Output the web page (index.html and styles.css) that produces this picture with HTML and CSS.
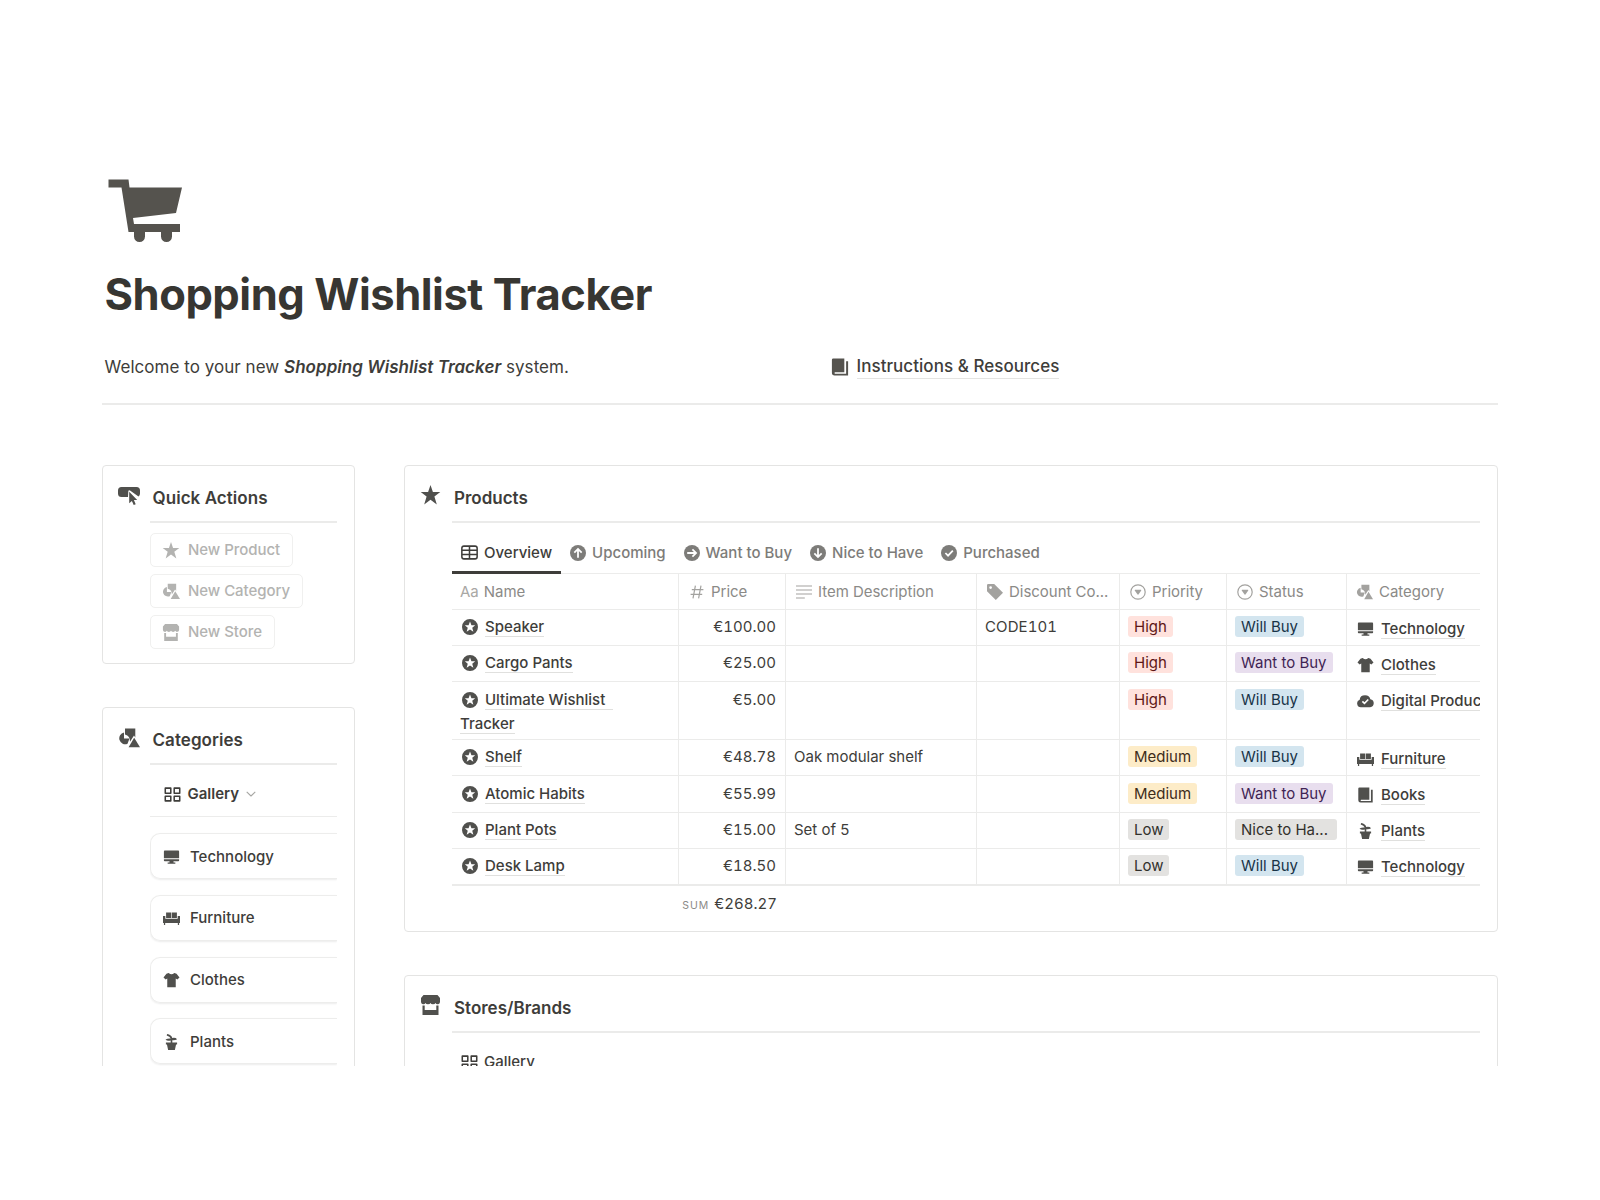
FILE: index.html
```html
<!DOCTYPE html>
<html lang="en">

<head>
    <meta charset="utf-8">
    <title>Shopping Wishlist Tracker</title>
    <link rel="stylesheet" href="styles.css">
</head>

<body>
    <svg width="0" height="0" class="sprite">
        <symbol id="star" viewBox="0 0 20 20"><path d="M10 0l2.4 7.1h7.4l-5.9 4.4 2.4 7.9-6.3-4.7-6.3 4.7 2.4-7.9L.2 7.1h7.4z"/></symbol>
        <symbol id="shapes" viewBox="0 0 22 20"><path d="M7 .5h10.300v9L16 7.500l-4 6.200Q12.300 8 7 6.500z"/><path d="M6 4.500v6h5.500L9.500 15.700A5.900 5.900 0 1 1 6 4.500z"/><path d="M16.200 9.800L22 19.300H10.600z"/></symbol>
        <symbol id="store" viewBox="0 0 20 20"><path d="M3 0h14l2.500 3v4a2.400 2.400 0 0 1-4.500 1 2.600 1.800 0 0 1-5 0 2.600 1.800 0 0 1-5 0A2.400 2.400 0 0 1 .5 7V3z"/><path d="M2 10.500h2.200V15h11.600v-4.500H18V20H2z"/></symbol>
        <symbol id="monitor" viewBox="0 0 20 20"><path d="M1.500 2h17q1 0 1 1v8.500H.5V3q0-1 1-1zM.5 12.700h19v1.600q0 1-1 1h-6v1.600h2.300v1.600H5.200v-1.600h2.300v-1.600h-6q-1 0-1-1z"/></symbol>
        <symbol id="sofa" viewBox="0 0 22 20"><path d="M4 3h6.600v7H4zM11.400 3H18v7h-6.600zM0 7.500h3V11h16V7.500h3v9h-1.200V19h-1.600v-2.500H2.800V19H1.200v-2.500H0z"/></symbol>
        <symbol id="shirt" viewBox="0 0 20 20"><path d="M6.500 1.300q3.500 3 7 0L16.300 2.300 20 6.800l-2.700 2.500-2-1.300v11H4.700V8l-2 1.300L0 6.800l3.700-4.500z"/></symbol>
        <symbol id="plant" viewBox="0 0 20 20"><path d="M4.500 0q5.500 1 6.500 5 4-.8 6 1.500-2.500 1.600-6 1.200v2.800h6v2.600h-1.300L14.200 20H5.800L4.300 13.100H3v-2.600h6V8Q5 9.300 2.500 7q3-1.700 6.500-1.300Q8 3.500 4 2z"/></symbol>
        <symbol id="book" viewBox="0 0 20 20"><path d="M1 2Q1 .5 2.500 .5h12.300v15.300H4.500a.9.900 0 0 0 0 1.700h12.300V3.500H19v16H4Q1 19.500 1 16.500z"/></symbol>
        <symbol id="cloud" viewBox="0 0 22 20"><path fill-rule="evenodd" d="M5 18a5 5 0 0 1-1.500-9.700Q4 2.500 10.500 2.500q5.500 0 6.800 5.200A5.200 5.200 0 0 1 17 18zM9.700 14.600l5.600-5.800-1.500-1.400-4.100 4.300-2-2-1.500 1.500z"/></symbol>
        <symbol id="circle-star" viewBox="0 0 20 20"><path fill-rule="evenodd" d="M10 0a10 10 0 1 1 0 20 10 10 0 1 1 0-20zM10 3.200L8.200 7.800H3.500l3.700 3.100-1.400 5L10 13.200l4.200 2.700-1.400-5 3.700-3.100h-4.700z"/></symbol>
        <symbol id="circle-up" viewBox="0 0 20 20"><circle cx="10" cy="10" r="10"/><path class="cut" d="M10 16V5.200M5.400 9.500L10 4.900l4.600 4.600"/></symbol>
        <symbol id="circle-right" viewBox="0 0 20 20"><circle cx="10" cy="10" r="10"/><path class="cut" d="M4 10h10.800M10.500 5.400l4.600 4.600-4.600 4.600"/></symbol>
        <symbol id="circle-down" viewBox="0 0 20 20"><circle cx="10" cy="10" r="10"/><path class="cut" d="M10 4v10.800M5.400 10.500l4.600 4.600 4.600-4.600"/></symbol>
        <symbol id="circle-check" viewBox="0 0 20 20"><circle cx="10" cy="10" r="10"/><path class="cut" d="M5.500 10l3.300 3.300 6-6.200"/></symbol>
        <symbol id="table" viewBox="0 0 20 20"><path class="line" d="M3.500 2.500h13q2.500 0 2.500 2.500v10q0 2.500-2.500 2.500h-13Q1 17.500 1 15V5q0-2.500 2.500-2.500zM1 7.300h18M1 12.300h18M10 2.500v15"/></symbol>
        <symbol id="gallery" viewBox="0 0 20 20"><path class="line" d="M1.500 2.500h6.500v6H1.500zM12 2.500h6.500v6H12zM1.500 12h6.500v5.500H1.500zM12 12h6.500v5.500H12z"/></symbol>
        <symbol id="chevron" viewBox="0 0 10 6"><path class="line chev" d="M.7 .8L5 5l4.300-4.200"/></symbol>
        <symbol id="hash" viewBox="0 0 20 20"><path class="line thin" d="M8 2L5 18M15 2l-3 16M3.500 7H18M2 13h14.500"/></symbol>
        <symbol id="lines" viewBox="0 0 20 20"><path class="line thin" d="M0 2.500h20M0 7.500h20M0 12.500h20M0 17.500h11"/></symbol>
        <symbol id="tag" viewBox="0 0 20 20"><path fill-rule="evenodd" d="M0 1.500Q0 0 1.500 0H9l11 11-9 9L0 9zM4.500 2.800a1.700 1.700 0 1 0 0 3.400 1.700 1.700 0 1 0 0-3.400z"/></symbol>
        <symbol id="select" viewBox="0 0 20 20"><circle class="line thin" cx="10" cy="10" r="9"/><path d="M6.300 7.300h7.400q.6.400.2 1l-3.400 4.900q-.5.500-1 0L6.100 8.300q-.4-.6.200-1z"/></symbol>
        <symbol id="button" viewBox="0 0 22 20"><path d="M3.500 1h15Q22 1 22 4.500v3q0 2-1.500 3L12 4.500q-1.500-.7-1.700 1L10 11H3.500Q0 11 0 7.500v-3Q0 1 3.500 1z"/><path d="M11.200 5.700l8 8.300-3.300.1 1.800 4.200-2 .8-1.800-4.100-2.700 2.300z"/></symbol>
    </svg>

    <div class="page">
        <svg class="cart" viewBox="0 0 80 80">
            <path d="M3.500 8.500h20l1 8H77l-6 25.500-43 5 1 6h46v8H23.500l-7-44.500h-13z"/>
            <path d="M29 59h11v6.500a5.500 5.500 0 0 1-11 0zM56 59h11v6.500a5.500 5.500 0 0 1-11 0z"/>
        </svg>
        <h1>Shopping Wishlist Tracker</h1>

        <div class="intro">
            <p class="welcome">Welcome to your new <strong>Shopping Wishlist Tracker</strong> system.</p>
            <a class="resources"><svg><use href="#book"/></svg><span>Instructions &amp; Resources</span></a>
        </div>

        <div class="columns">
            <div class="side">
                <section class="card quick">
                    <svg class="card-icon"><use href="#button"/></svg>
                    <h2>Quick Actions</h2>
                    <div class="buttons">
                        <button><svg><use href="#star"/></svg>New Product</button>
                        <button><svg><use href="#shapes"/></svg>New Category</button>
                        <button><svg><use href="#store"/></svg>New Store</button>
                    </div>
                </section>

                <section class="card categories">
                    <svg class="card-icon"><use href="#shapes"/></svg>
                    <h2>Categories</h2>
                    <div class="view"><svg><use href="#gallery"/></svg>Gallery<svg class="chevron"><use href="#chevron"/></svg></div>
                    <div class="items">
                        <div class="item"><svg><use href="#monitor"/></svg>Technology</div>
                        <div class="item"><svg><use href="#sofa"/></svg>Furniture</div>
                        <div class="item"><svg><use href="#shirt"/></svg>Clothes</div>
                        <div class="item"><svg><use href="#plant"/></svg>Plants</div>
                    </div>
                </section>
            </div>

            <div class="main">
                <section class="card products">
                    <svg class="card-icon"><use href="#star"/></svg>
                    <h2>Products</h2>
                    <nav class="tabs">
                        <a class="tab active"><svg><use href="#table"/></svg>Overview</a>
                        <a class="tab"><svg><use href="#circle-up"/></svg>Upcoming</a>
                        <a class="tab"><svg><use href="#circle-right"/></svg>Want to Buy</a>
                        <a class="tab"><svg><use href="#circle-down"/></svg>Nice to Have</a>
                        <a class="tab"><svg><use href="#circle-check"/></svg>Purchased</a>
                    </nav>

                    <div class="table">
                        <div class="row head">
                            <div><span class="aa">Aa</span>Name</div>
                            <div><svg><use href="#hash"/></svg>Price</div>
                            <div><svg><use href="#lines"/></svg>Item Description</div>
                            <div><svg><use href="#tag"/></svg>Discount Co...</div>
                            <div><svg><use href="#select"/></svg>Priority</div>
                            <div><svg><use href="#select"/></svg>Status</div>
                            <div><svg><use href="#shapes"/></svg>Category</div>
                        </div>
                        <div class="row">
                            <div class="name"><svg><use href="#circle-star"/></svg><span>Speaker</span></div>
                            <div class="price">€100.00</div>
                            <div></div>
                            <div class="code">CODE101</div>
                            <div><span class="pill red">High</span></div>
                            <div><span class="pill blue">Will Buy</span></div>
                            <div class="category"><svg><use href="#monitor"/></svg><span>Technology</span></div>
                        </div>
                        <div class="row">
                            <div class="name"><svg><use href="#circle-star"/></svg><span>Cargo Pants</span></div>
                            <div class="price">€25.00</div>
                            <div></div>
                            <div></div>
                            <div><span class="pill red">High</span></div>
                            <div><span class="pill purple">Want to Buy</span></div>
                            <div class="category"><svg><use href="#shirt"/></svg><span>Clothes</span></div>
                        </div>
                        <div class="row tall">
                            <div class="name"><svg><use href="#circle-star"/></svg><span>Ultimate Wishlist&nbsp;&nbsp;<br>Tracker</span></div>
                            <div class="price">€5.00</div>
                            <div></div>
                            <div></div>
                            <div><span class="pill red">High</span></div>
                            <div><span class="pill blue">Will Buy</span></div>
                            <div class="category"><svg><use href="#cloud"/></svg><span>Digital Produc</span></div>
                        </div>
                        <div class="row">
                            <div class="name"><svg><use href="#circle-star"/></svg><span>Shelf</span></div>
                            <div class="price">€48.78</div>
                            <div>Oak modular shelf</div>
                            <div></div>
                            <div><span class="pill yellow">Medium</span></div>
                            <div><span class="pill blue">Will Buy</span></div>
                            <div class="category"><svg><use href="#sofa"/></svg><span>Furniture</span></div>
                        </div>
                        <div class="row">
                            <div class="name"><svg><use href="#circle-star"/></svg><span>Atomic Habits</span></div>
                            <div class="price">€55.99</div>
                            <div></div>
                            <div></div>
                            <div><span class="pill yellow">Medium</span></div>
                            <div><span class="pill purple">Want to Buy</span></div>
                            <div class="category"><svg><use href="#book"/></svg><span>Books</span></div>
                        </div>
                        <div class="row">
                            <div class="name"><svg><use href="#circle-star"/></svg><span>Plant Pots</span></div>
                            <div class="price">€15.00</div>
                            <div>Set of 5</div>
                            <div></div>
                            <div><span class="pill gray">Low</span></div>
                            <div><span class="pill gray wide">Nice to Ha...</span></div>
                            <div class="category"><svg><use href="#plant"/></svg><span>Plants</span></div>
                        </div>
                        <div class="row last">
                            <div class="name"><svg><use href="#circle-star"/></svg><span>Desk Lamp</span></div>
                            <div class="price">€18.50</div>
                            <div></div>
                            <div></div>
                            <div><span class="pill gray">Low</span></div>
                            <div><span class="pill blue">Will Buy</span></div>
                            <div class="category"><svg><use href="#monitor"/></svg><span>Technology</span></div>
                        </div>
                    </div>
                    <div class="sum"><small>SUM</small>€268.27</div>
                </section>

                <section class="card">
                    <svg class="card-icon"><use href="#store"/></svg>
                    <h2>Stores/Brands</h2>
                    <nav class="tabs">
                        <a class="tab current"><svg><use href="#gallery"/></svg>Gallery</a>
                    </nav>
                </section>
            </div>
        </div>
    </div>
</body>

</html>
```

FILE: styles.css
```css
* {
    box-sizing: border-box;
}

body {
    margin: 0;
    background: #fff;
    color: #3e3d3a;
    font-family: Inter, "Liberation Sans", sans-serif;
    font-size: 15px;
    line-height: 20px;
}

svg {
    flex-shrink: 0;
    fill: currentColor;
}

.sprite {
    position: absolute;
}

.line {
    fill: none;
    stroke: currentColor;
    stroke-width: 1.8;
    stroke-linejoin: round;
}

.thin {
    stroke-width: 1.5;
}

.chev {
    stroke-width: 1.1;
}

.cut {
    fill: none;
    stroke: #fff;
    stroke-width: 2.2;
}

.page {
    height: 1066px;
    padding: 171px 102px 0;
    overflow: hidden;
}

.cart {
    display: block;
    width: 80px;
    height: 80px;
    margin-left: 2.500px;
    color: #55534e;
}

h1 {
    margin: 17px 0 0 2.500px;
    color: #373632;
    font-size: 43.500px;
    line-height: 52px;
    font-weight: 700;
    letter-spacing: -.45px;
}

.intro {
    display: grid;
    grid-template-columns: 726px 1fr;
    padding: 34px 0 23px 2.500px;
    border-bottom: 2px solid #ebebea;
    font-size: 17px;
    line-height: 26px;
    letter-spacing: .04px;
}

.welcome {
    margin: 0;
}

.welcome strong {
    font-weight: 600;
    font-style: italic;
}

.resources {
    display: flex;
    gap: 8px;
    margin-top: -1px;
    font-weight: 500;
}

.resources svg {
    width: 18px;
    height: 18px;
    margin-top: 5px;
    color: #55534e;
}

.resources span {
    height: 26px;
    border-bottom: 1px solid #e4e4e2;
}

.columns {
    display: grid;
    grid-template-columns: 253px 1094px;
    gap: 49px;
    margin-top: 60px;
}

.side,
.main {
    display: flex;
    flex-direction: column;
    gap: 43px;
}

/* cards: icon in the left gutter, everything else in the second column */
.card {
    display: grid;
    grid-template-columns: 32px minmax(0, 1fr);
    padding: 19px 17px 0 15px;
    border: 1px solid #e4e4e3;
    border-radius: 4px;
    min-height: 199px;
    align-content: start;
}

.card > * {
    grid-column: 2;
}

.card > .card-icon {
    grid-column: 1;
    grid-row: 1;
    width: 22px;
    height: 20px;
    margin-top: 1px;
    color: #50504d;
}

.main .card > .card-icon {
    width: 21px;
    margin-top: 0;
}

.categories {
    padding-bottom: 20px;
}

h2 {
    grid-row: 1;
    margin: 0;
    padding: 0 0 10px 2px;
    border-bottom: 2px solid #ebebea;
    font-size: 17px;
    line-height: 26px;
    font-weight: 600;
}

.side h2 {
    padding-left: 2.500px;
    letter-spacing: .05px;
}

/* quick actions */
.buttons {
    display: flex;
    flex-direction: column;
    align-items: flex-start;
    gap: 7px;
    padding-top: 10px;
}

button {
    display: flex;
    align-items: center;
    gap: 8px;
    height: 34px;
    margin: 0;
    padding: 0 12px 0 11px;
    border: 1px solid #f0f0ef;
    border-radius: 5px;
    background: none;
    color: #b3b3b1;
    font: 500 15px/20px Inter, "Liberation Sans", sans-serif;
    letter-spacing: -.05px;
}

button svg {
    width: 18px;
    height: 17px;
}

/* categories */
.view {
    display: flex;
    align-items: center;
    gap: 6.500px;
    height: 52px;
    padding: 7px 0 0 14px;
    border-bottom: 1px solid #ececeb;
    font-weight: 600;
}

.view svg {
    width: 17px;
    height: 17px;
}

.view .chevron {
    width: 10px;
    height: 6px;
    color: #a6a6a3;
}

.items {
    display: flex;
    flex-direction: column;
    gap: 15.800px;
    padding: 16px 0 4px;
    overflow: hidden;
}

.item {
    display: flex;
    align-items: center;
    gap: 10px;
    height: 46px;
    padding: 1px 0 0 12px;
    border: 1px solid #ededec;
    border-right: 0;
    border-radius: 10px 0 0 10px;
    box-shadow: 0 1px 2px rgba(0, 0, 0, .08);
    font-weight: 500;
}

.item svg,
.category svg {
    width: 17px;
    height: 16px;
    color: #50504d;
}

/* products */
.tabs {
    display: flex;
    margin-top: 11px;
    box-shadow: inset 0 -1px #ececeb;
}

.tab {
    display: flex;
    align-items: center;
    gap: 6px;
    height: 40px;
    padding: 0 9px;
    border-bottom: 3px solid transparent;
    color: #7d7c79;
    font-weight: 500;
}

.tab svg {
    width: 16px;
    height: 16px;
}

.tab.active,
.tab.current {
    color: #3e3d3a;
}

.tab.active svg,
.tab.current svg {
    width: 17px;
    height: 17px;
}

.tab.active {
    border-bottom-color: #3e3d3a;
}

.table {
    overflow: hidden;
}

.row {
    display: grid;
    grid-template-columns: 227px 107px 191px 143px 107px 120px 1fr;
    height: 36.200px;
    border-bottom: 1px solid #ebebea;
    line-height: 24px;
}

.row > div {
    padding: 5.300px 9px 0 8px;
    border-right: 1px solid #ebebea;
    white-space: nowrap;
}

.row > div:last-child {
    border-right: 0;
    padding-right: 0;
}

.row.tall {
    height: 57.800px;
}

.row.last {
    height: 37px;
    border-bottom-width: 2px;
}

.row.head {
    height: 36px;
    color: #8b8a87;
}

.row.head > div {
    display: flex;
    align-items: center;
    gap: 6.500px;
    padding: 0 0 0 9.500px;
    letter-spacing: -.03px;
}

.row.head > div:first-child {
    padding-left: 8px;
    gap: 5px;
}

.head svg {
    width: 16px;
    height: 16px;
    color: #a3a29f;
}

.head div:last-child svg {
    width: 17px;
    margin: 0 -.500px;
}

.aa {
    color: #a9a8a5;
}

.name,
.category {
    font-weight: 500;
}

.name span,
.category span {
    border-bottom: 1px solid #e0e0de;
}

.name svg {
    width: 16px;
    height: 16px;
    margin: 0 7px 0 2px;
    vertical-align: -3px;
    color: #50504d;
}

.row > .category {
    padding-top: 6.500px;
    padding-left: 10px;
    overflow: hidden;
}

.category svg {
    margin-right: 7px;
    vertical-align: -3px;
}

.price,
.sum {
    text-align: right;
    font-variant-numeric: tabular-nums;
}

.code {
    font-variant-numeric: tabular-nums;
    letter-spacing: .1px;
}

.pill {
    display: inline-block;
    height: 21px;
    padding: 0 6px;
    border-radius: 3px;
    line-height: 21px;
}

.pill.wide {
    width: 102px;
}

.red {
    background: #ffe2dd;
    color: #5d1715;
}

.blue {
    background: #d3e5ef;
    color: #183347;
}

.purple {
    background: #e8deee;
    color: #412454;
}

.yellow {
    background: #fdecc8;
    color: #402c1b;
}

.gray {
    background: #e3e2e0;
    color: #32302c;
}

.sum {
    width: 325px;
    height: 45px;
    padding-top: 8.500px;
}

.sum small {
    margin-right: 5px;
    color: #8b8a87;
    font-size: 10.500px;
    letter-spacing: 1px;
}
```
